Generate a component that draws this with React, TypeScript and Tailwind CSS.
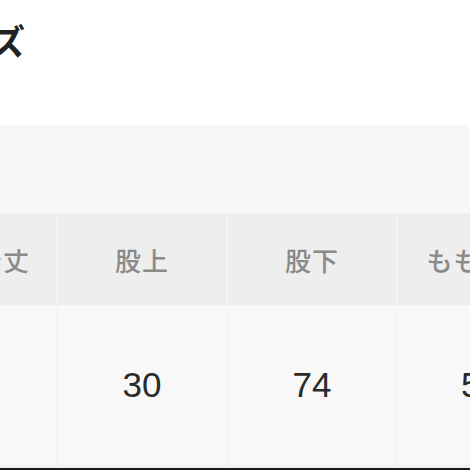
export default function App() {
  const cols = [
    { label: "着丈", value: "", w: "w-[108px]" },
    { label: "股上", value: "30", w: "w-[170px]" },
    { label: "股下", value: "74", w: "w-[170px]" },
    { label: "もも周り", value: "58", w: "w-[167px]" },
  ];
  return (
    <div className="w-[470px] h-[470px] overflow-hidden bg-white flex flex-col font-['Liberation_Sans','Noto_Sans_CJK_JP',sans-serif]">
      <div className="h-[125px] shrink-0 bg-white">
        <div className="ml-[-79px] mt-[18px] text-[35px] leading-[44px] font-bold text-[#222] font-['Noto_Sans_CJK_JP',sans-serif]">
          サイズ
        </div>
      </div>
      <div className="h-[88px] shrink-0 bg-[#f7f7f7]" />
      <div className="flex ml-[-50px] shrink-0">
        {cols.map((c, i) => (
          <div key={i} className={`${c.w} shrink-0 flex flex-col border-r-[2px] border-[#f4f4f4]`}>
            <div className="h-[92px] bg-[#eeeeee] flex items-center justify-center text-[26px] text-[#8a8a8a] font-medium font-['Noto_Sans_CJK_JP',sans-serif] tracking-[1px] whitespace-nowrap">
              {c.label}
            </div>
            <div className="h-[160px] bg-[#f8f8f8] flex items-center justify-center text-[35px] text-[#2a2a2a]">
              {c.value}
            </div>
          </div>
        ))}
      </div>
      <div className="h-[3px] shrink-0 bg-[#f0f0f0]" />
      <div className="flex-1 bg-[#1a1a1a]" />
    </div>
  );
}
